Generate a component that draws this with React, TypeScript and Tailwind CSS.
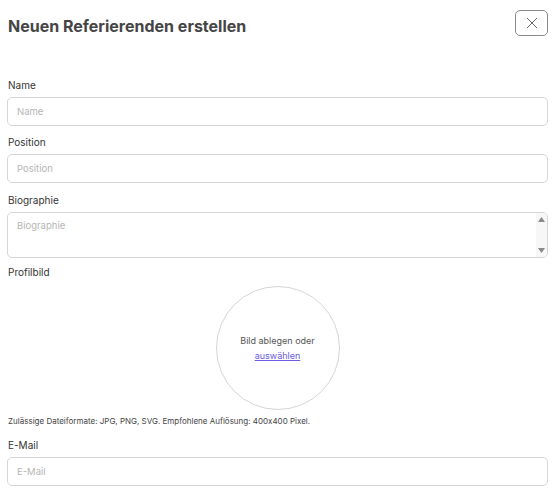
import React from 'react';

const Label: React.FC<{ text: string }> = ({ text }) => (
  <label className="block text-[10px] leading-[16px] text-[#333] mb-[4px]">{text}</label>
);

const TextInput: React.FC<{ placeholder: string }> = ({ placeholder }) => (
  <input
    type="text"
    placeholder={placeholder}
    className="block w-full h-[29px] rounded-[5px] border border-[#d6d6d6] bg-white px-[9px] text-[9.5px] text-[#333] placeholder:text-[#b5b5b5] outline-none"
  />
);

export default function App() {
  return (
    <div className="min-h-screen bg-white pl-[7px] pr-[11px] pt-[10px] font-['Inter',sans-serif]">
      <div className="flex items-start justify-between h-[26px] pl-[1px]">
        <h1 className="mt-[3px] text-[16px] leading-[26px] font-bold text-[#454545]">Neuen Referierenden erstellen</h1>
        <button className="flex items-center justify-center w-[33px] h-[26px] rounded-[5px] border border-[#8a8a8a] text-[#666]">
          <svg width="12" height="12" viewBox="0 0 12 12" fill="none" stroke="currentColor" strokeWidth="1">
            <path d="M1 1L11 11M11 1L1 11" />
          </svg>
        </button>
      </div>

      <div className="mt-[41px] pl-[1px]">
        <Label text="Name" />
      </div>
      <TextInput placeholder="Name" />

      <div className="mt-[8px] pl-[1px]">
        <Label text="Position" />
      </div>
      <TextInput placeholder="Position" />

      <div className="mt-[9px] pl-[1px]">
        <Label text="Biographie" />
      </div>
      <div className="flex h-[46px] rounded-[5px] border border-[#d6d6d6] bg-white overflow-hidden">
        <textarea
          placeholder="Biographie"
          className="flex-1 resize-none px-[9px] pt-[6px] text-[9.5px] leading-[14px] text-[#333] placeholder:text-[#b5b5b5] outline-none"
        />
        <div className="flex w-[11px] flex-col items-center justify-between bg-[#f7f7f7] py-[4px]">
          <svg width="7" height="5" viewBox="0 0 7 5"><path d="M3.5 0L7 5H0Z" fill="#8a8a8a" /></svg>
          <svg width="7" height="5" viewBox="0 0 7 5"><path d="M0 0H7L3.5 5Z" fill="#8a8a8a" /></svg>
        </div>
      </div>

      <div className="mt-[6px] pl-[1px]">
        <Label text="Profilbild" />
      </div>
      <div className="flex justify-center mt-[6px]">
        <div className="flex h-[124px] w-[124px] flex-col items-center justify-center rounded-full border border-[#d6d6d6] text-[9px] leading-[15px] text-[#555]">
          <span>Bild ablegen oder</span>
          <a href="#" className="text-[#6b5be6] underline">auswählen</a>
        </div>
      </div>
      <p className="mt-[4px] pl-[1px] text-[8px] leading-[14px] text-[#444] [font-feature-settings:'calt'_0]">
        Zulässige Dateiformate: JPG, PNG, SVG. Empfohlene Auflösung: 400x400 Pixel.
      </p>

      <div className="mt-[9px] pl-[1px]">
        <Label text="E-Mail" />
      </div>
      <TextInput placeholder="E-Mail" />
    </div>
  );
}
